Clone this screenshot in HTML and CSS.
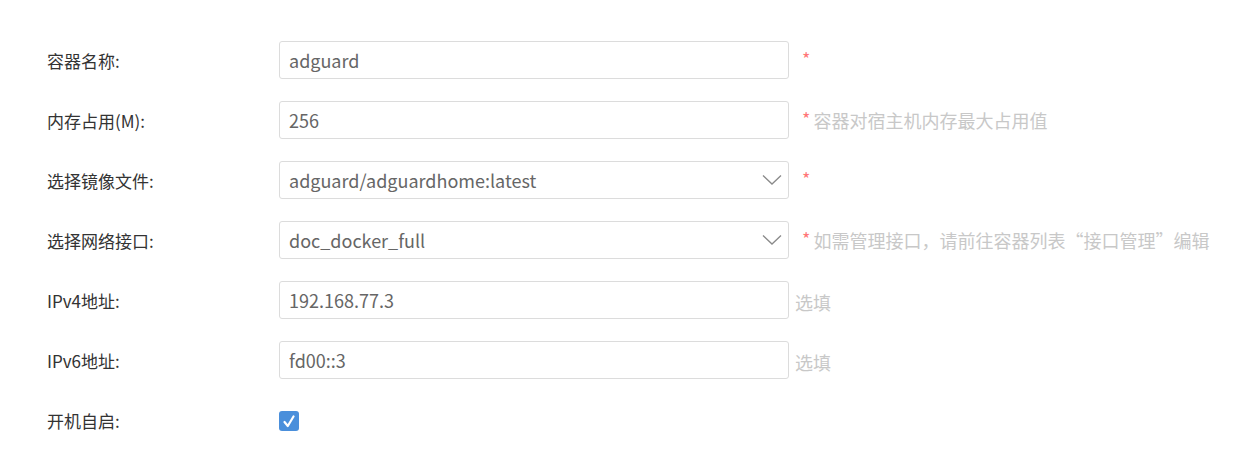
FILE: index.html
```html
<!DOCTYPE html>
<html lang="zh-CN">
<head>
    <meta charset="UTF-8">
    <title>容器设置</title>
    <link rel="stylesheet" href="styles.css">
</head>
<body>
    <form class="form">
        <div class="row">
            <label class="label">容器名称:</label>
            <input class="field" type="text" value="adguard">
            <span class="req">*</span>
        </div>
        <div class="row">
            <label class="label">内存占用(M):</label>
            <input class="field" type="text" value="256">
            <span class="req">*</span><span class="hint">容器对宿主机内存最大占用值</span>
        </div>
        <div class="row">
            <label class="label">选择镜像文件:</label>
            <div class="select">
                <span>adguard/adguardhome:latest</span>
                <svg class="chev" width="20" height="12" viewBox="0 0 20 12"><path d="M1 1.5 L10 10 L19 1.5" fill="none" stroke="#8a8a8a" stroke-width="1.3"/></svg>
            </div>
            <span class="req">*</span>
        </div>
        <div class="row">
            <label class="label">选择网络接口:</label>
            <div class="select">
                <span>doc_docker_full</span>
                <svg class="chev" width="20" height="12" viewBox="0 0 20 12"><path d="M1 1.5 L10 10 L19 1.5" fill="none" stroke="#8a8a8a" stroke-width="1.3"/></svg>
            </div>
            <span class="req">*</span><span class="hint">如需管理接口，请前往容器列表“接口管理”编辑</span>
        </div>
        <div class="row">
            <label class="label">IPv4地址:</label>
            <input class="field" type="text" value="192.168.77.3">
            <span class="opt">选填</span>
        </div>
        <div class="row">
            <label class="label">IPv6地址:</label>
            <input class="field" type="text" value="fd00::3">
            <span class="opt">选填</span>
        </div>
        <div class="row">
            <label class="label">开机自启:</label>
            <span class="check">
                <svg width="12" height="13" viewBox="0 0 12 13"><path d="M1.5 7 L4.8 11 L10.5 1.5" fill="none" stroke="#fff" stroke-width="2.2" stroke-linecap="round" stroke-linejoin="round"/></svg>
            </span>
        </div>
    </form>
</body>
</html>
```

FILE: styles.css
```css
body {
    margin: 0;
    background: #ffffff;
    font-family: "Noto Sans CJK SC", "Noto Sans", sans-serif;
    color: #333333;
}

.form {
    padding: 41px 0 0 47px;
    display: flex;
    flex-direction: column;
    gap: 22px;
}

.row {
    display: flex;
    align-items: center;
    height: 38px;
}

.label {
    width: 232px;
    font-size: 17px;
    color: #333;
}

.field,
.select {
    box-sizing: border-box;
    width: 510px;
    height: 38px;
    border: 1px solid #dcdcdc;
    border-radius: 3px;
    padding: 0 9px;
    font-family: inherit;
    font-size: 18px;
    color: #666;
    background: #fff;
    outline: none;
}

.select {
    display: flex;
    align-items: center;
    justify-content: space-between;
    padding-right: 6px;
}

.chev {
    display: block;
}

.req {
    color: #f77;
    font-size: 18px;
    margin-left: 13px;
    margin-right: 3px;
    position: relative;
    top: -2px;
}

.hint,
.opt {
    color: #c8c8c8;
    font-size: 18px;
}

.opt {
    margin-left: 6px;
    position: relative;
    top: 2px;
}

.check {
    width: 20px;
    height: 20px;
    border-radius: 3px;
    background: #4a8fdb;
    display: flex;
    align-items: center;
    justify-content: center;
    margin-top: 2px;
}
```
